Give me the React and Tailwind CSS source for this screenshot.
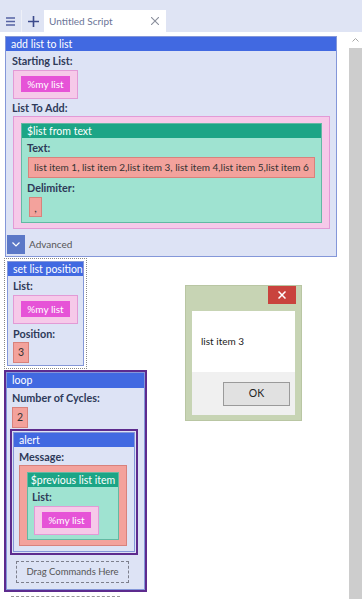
import React from "react";

const font = { fontFamily: 'Lato, "Noto Sans", sans-serif' };

// header strip of a command block
function Header({ children, tall }) {
  return (
    <div
      className={`${tall ? "h-[15px] leading-[15px]" : "h-[14px] leading-[14px]"} bg-[#4169e1] pl-[5px] text-[10.5px] text-white whitespace-nowrap`}
    >
      {children}
    </div>
  );
}

function Label({ children }) {
  return (
    <div className="h-[16px] text-[10.8px] font-bold leading-[16px] text-[#2e3a59] whitespace-nowrap">
      {children}
    </div>
  );
}

// %my list variable inside its pink slot
function ListSlot() {
  return (
    <div className="w-[65px] border border-[#e29ad6] bg-[#f6c9e9] pt-[5px] pb-[6px] pl-[7px]">
      <div className="h-[16px] w-[49px] bg-[#e653d7] text-center text-[10px] leading-[16px] text-white">
        %my list
      </div>
    </div>
  );
}

function NumSlot({ value }) {
  return (
    <div className="flex h-[21px] w-[16px] items-center justify-center border border-[#d8827c] bg-[#f3a29c] text-[10.5px] text-[#333]">
      {value}
    </div>
  );
}

export default function App() {
  return (
    <div style={font} className="h-[599px] w-[362px] overflow-hidden bg-white">
      {/* tab bar */}
      <div className="flex h-[32px] items-end bg-[#dfe4f4]">
        <div className="flex h-[22px] w-[22px] items-center justify-center border-r border-[#eef0f8]">
          <svg width="9" height="9" viewBox="0 0 9 9">
            <path d="M0 1h9M0 4.5h9M0 8h9" stroke="#5562a3" strokeWidth="1.4" />
          </svg>
        </div>
        <div className="flex h-[22px] w-[22px] items-center justify-center">
          <svg width="11" height="11" viewBox="0 0 11 11">
            <path d="M5.5 0v11M0 5.5h11" stroke="#3c4a8c" strokeWidth="1.6" />
          </svg>
        </div>
        <div className="flex h-[22px] w-[122px] items-center justify-between bg-white pl-[5px] pr-[7px]">
          <span className="text-[10px] text-[#6b7597]">Untitled Script</span>
          <svg width="8" height="8" viewBox="0 0 8 8">
            <path d="M0 0l8 8M8 0l-8 8" stroke="#8a8f9c" strokeWidth="1.1" />
          </svg>
        </div>
      </div>

      <div className="flex h-[567px]">
        {/* script canvas */}
        <div className="relative w-[349px]">
          {/* add list to list */}
          <div className="ml-[5px] mt-[4px] w-[332px] border border-[#8497d9] bg-[#dde3f5]">
            <Header>add list to list</Header>
            <div className="pl-[6px] pt-[2px]">
              <Label>Starting List:</Label>
            </div>
            <div className="ml-[7px] mt-[1px]">
              <ListSlot />
            </div>
            <div className="pl-[6px] pt-[1px]">
              <Label>List To Add:</Label>
            </div>
            <div className="ml-[7px] w-[317px] border border-[#e29ad6] bg-[#f6c9e9] pt-[6px] pb-[5px] px-[7px]">
              <div className="border border-[#63b9a3] bg-[#9fe3d1]">
                <div className="h-[14px] bg-[#1ca586] pl-[5px] text-[10.5px] leading-[14px] text-white">
                  $list from text
                </div>
                <div className="pl-[5px] pt-[2px]">
                  <Label>Text:</Label>
                </div>
                <div className="ml-[6px] mt-[1px] flex h-[21px] w-[287px] items-center justify-center border border-[#d8827c] bg-[#f3a29c] text-[10px] text-[#333] whitespace-nowrap">
                  list item 1, list item 2,list item 3, list item 4,list item 5,list item 6
                </div>
                <div className="pl-[5px] pt-[2px]">
                  <Label>Delimiter:</Label>
                </div>
                <div className="mb-[5px] ml-[7px] mt-[1px] flex h-[20px] w-[13px] items-center justify-center border border-[#d8827c] bg-[#f3a29c] text-[11px] leading-none text-[#333]">
                  ,
                </div>
              </div>
            </div>
            <div className="mt-[6px] mb-[2px] flex items-center gap-[4px] pl-[1px]">
              <div className="flex h-[19px] w-[18px] items-center justify-center bg-[#5b78c7]">
                <svg width="8" height="5" viewBox="0 0 8 5">
                  <path d="M0.5 0.5l3.5 3.5 3.5-3.5" stroke="white" strokeWidth="1.2" fill="none" />
                </svg>
              </div>
              <span className="text-[10px] text-[#555]">Advanced</span>
            </div>
          </div>

          {/* set list position, selected */}
          <div className="ml-[4px] mt-[1px] w-[83px] border border-dotted border-[#888] p-[2px]">
            <div className="border border-[#8497d9] bg-[#dde3f5] pb-[2px]">
              <Header>set list position</Header>
              <div className="pl-[5px] pt-[2px]">
                <Label>List:</Label>
              </div>
              <div className="ml-[5px] mt-[1px]">
                <ListSlot />
              </div>
              <div className="pl-[5px] pt-[2px]">
                <Label>Position:</Label>
              </div>
              <div className="ml-[5px]">
                <NumSlot value="3" />
              </div>
            </div>
          </div>

          {/* loop */}
          <div className="ml-[4px] mt-[1px] w-[143px] border-2 border-[#5d2b8e] bg-[#e8e3f4]">
            <div className="border border-[#8497d9] bg-[#dde3f5] pb-[6px]">
              <Header tall>loop</Header>
              <div className="pl-[5px] pt-[2px]">
                <Label>Number of Cycles:</Label>
              </div>
              <div className="ml-[5px] mt-[1px]">
                <NumSlot value="2" />
              </div>
              <div className="ml-[3px] mt-[1px] w-[128px] border-2 border-[#5d2b8e] p-[1px]">
                <div className="border border-[#8497d9] bg-[#dde3f5] pb-[5px]">
                  <Header>alert</Header>
                  <div className="pl-[5px] pt-[2px]">
                    <Label>Message:</Label>
                  </div>
                  <div className="ml-[5px] w-[108px] border border-[#d8827c] bg-[#f3a29c] px-[7px] pt-[6px] pb-[5px]">
                    <div className="border border-[#63b9a3] bg-[#9fe3d1] pb-[4px]">
                      <div className="h-[14px] bg-[#1ca586] text-center text-[10.5px] leading-[14px] text-white whitespace-nowrap">
                        $previous list item
                      </div>
                      <div className="pl-[4px] pt-[2px]">
                        <Label>List:</Label>
                      </div>
                      <div className="ml-[6px] mt-[1px]">
                        <ListSlot />
                      </div>
                    </div>
                  </div>
                </div>
              </div>
              <div className="ml-[9px] mt-[6px] flex h-[22px] w-[113px] items-center justify-center border border-dashed border-[#7d7f8c] text-[9.5px] text-[#555] whitespace-nowrap">
                Drag Commands Here
              </div>
            </div>
          </div>
          <div className="ml-[11px] mt-[4px] w-[109px] border-t border-dashed border-[#999]" />

          {/* message box window */}
          <div className="absolute left-[185px] top-[253px] w-[117px] border border-[#b9c6a3] bg-[#c7d4b4] px-[6px] pb-[5px]">
            <div className="flex h-[25px] justify-end">
              <div className="-mr-[1px] flex h-[18px] w-[28px] items-center justify-center bg-[#c9433d]">
                <svg width="8" height="8" viewBox="0 0 8 8">
                  <path d="M0.5 0.5l7 7M7.5 0.5l-7 7" stroke="white" strokeWidth="1.5" />
                </svg>
              </div>
            </div>
            <div className="flex h-[61px] items-center bg-white pl-[9px] text-[10px] text-[#222]">
              list item 3
            </div>
            <div className="flex h-[43px] items-center justify-end bg-[#f0f0f0] pr-[5px]">
              <div className="flex h-[24px] w-[67px] items-center justify-center border border-[#9a9a9a] bg-[#e1e1e1] text-[10.5px] text-[#222]">
                OK
              </div>
            </div>
          </div>
        </div>

        {/* scrollbar */}
        <div className="flex w-[13px] flex-col">
          <div className="flex h-[16px] items-center justify-center bg-white">
            <svg width="7" height="4" viewBox="0 0 7 4">
              <path d="M0.5 3.5l3-3 3 3" stroke="#a6a6a6" strokeWidth="1" fill="none" />
            </svg>
          </div>
          <div className="flex-1 bg-[#cdcdcd]" />
        </div>
      </div>
    </div>
  );
}
